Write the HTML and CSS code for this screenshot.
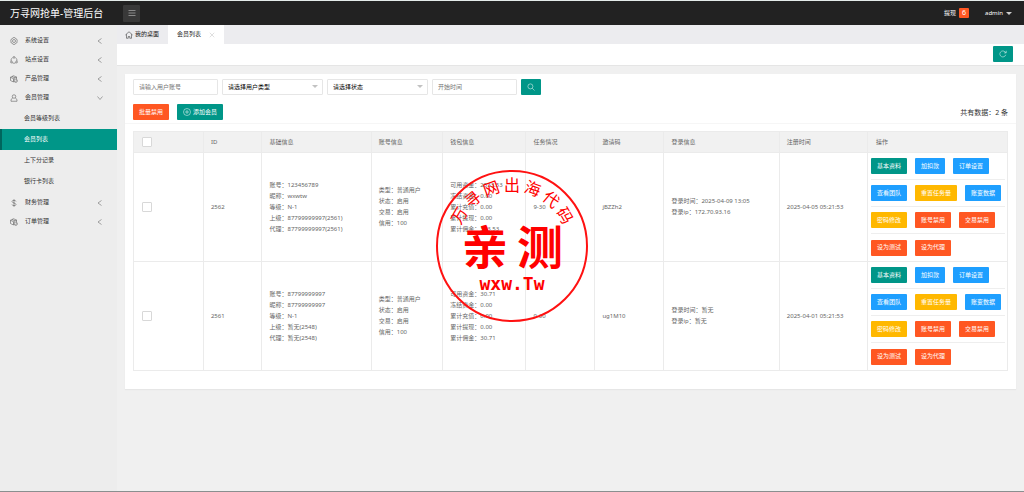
FILE: index.html
```html
<!DOCTYPE html>
<html lang="zh-CN">
<head>
<meta charset="utf-8">
<title>万寻网抢单-管理后台</title>
<link rel="stylesheet" href="styles.css">
</head>
<body>
<svg class="defs" width="0" height="0" aria-hidden="true">
  <symbol id="i-gear" viewBox="0 0 16 16"><path d="M5.500 1.800 8 1l2.500.8 1 1.700 2 .8.9 2.500L13.800 8l.6 2.200-.9 1.500-2 .8-1 1.700L8 15l-2.500-.8-1-1.700-2-.8-.9-1.500L2.200 8l-.6-1.200.9-2.500 2-.8z"/><circle cx="8" cy="8" r="3"/></symbol>
  <symbol id="i-site" viewBox="0 0 16 16"><path d="M5 3.500C2.500 5 1.700 7.500 2.300 10M11 3.500c2.500 1.500 3.300 4 2.700 6.500M4.500 13.500c2 1.300 5 1.300 7 0"/><circle cx="8" cy="2.800" r="1.800"/><circle cx="2.900" cy="12" r="1.800"/><circle cx="13.100" cy="12" r="1.800"/></symbol>
  <symbol id="i-box" viewBox="0 0 16 16"><path d="M1 4.500 7 1.500l6 2.500v4M1 4.500v6.500l6 3V7.500zM7 7.500 13 4M4 3l6 2.800"/><circle cx="11.500" cy="11.500" r="3.300"/><path d="m10 11.500 1.200 1.200 2-2.200"/></symbol>
  <symbol id="i-user" viewBox="0 0 16 16"><circle cx="8" cy="5" r="3.500"/><path d="M5.500 8 2 11v3.500h12V11l-3.500-3"/></symbol>
  <symbol id="i-dollar" viewBox="0 0 16 16"><path d="M12 5c0-3-8-3.300-8 0s8 2.700 8 6-8 3-8 0M8 .5v15"/></symbol>
  <symbol id="i-left" viewBox="0 0 16 16"><path d="M11 3 4 8l7 5"/></symbol>
  <symbol id="i-down" viewBox="0 0 16 16"><path d="m3 5 5 6 5-6"/></symbol>
  <symbol id="i-home" viewBox="0 0 16 16"><path d="M.8 8 8 1.500 15.200 8M3 6.500v8h3.500V11h3v3.500H13v-8"/></symbol>
  <symbol id="i-close" viewBox="0 0 16 16"><path d="m2 2 12 12M14 2 2 14"/></symbol>
  <symbol id="i-bars" viewBox="0 0 16 16"><path d="M1 3h14M1 8h14M1 13h14"/></symbol>
  <symbol id="i-refresh" viewBox="0 0 16 16"><path d="M13.500 9.500A6 6 0 1 1 12 3.700L14 5.500M14.500 1.500v4.300h-4.300"/></symbol>
  <symbol id="i-search" viewBox="0 0 16 16"><circle cx="6.800" cy="6.800" r="5"/><path d="m10.500 10.500 4.500 4.500"/></symbol>
  <symbol id="i-add" viewBox="0 0 16 16"><circle cx="8" cy="8" r="7"/><path d="M8 4v8M4 8h8"/></symbol>
</svg>

<header class="topbar">
  <a class="brand" href="#">万寻网抢单-管理后台</a>
  <button class="toggle" type="button" aria-label="菜单"><svg class="icon"><use href="#i-bars"/></svg></button>
  <nav class="account">
    <a class="withdraw" href="#">提现 <span class="badge">6</span></a>
    <a class="admin" href="#">admin <span class="caret"></span></a>
  </nav>
</header>

<div class="body">
  <nav class="sidebar">
    <a class="item" href="#"><svg class="icon"><use href="#i-gear"/></svg><span>系统设置</span><svg class="arrow"><use href="#i-left"/></svg></a>
    <a class="item" href="#"><svg class="icon"><use href="#i-site"/></svg><span>站点设置</span><svg class="arrow"><use href="#i-left"/></svg></a>
    <a class="item" href="#"><svg class="icon"><use href="#i-box"/></svg><span>产品管理</span><svg class="arrow"><use href="#i-left"/></svg></a>
    <a class="item" href="#"><svg class="icon"><use href="#i-user"/></svg><span>会员管理</span><svg class="arrow"><use href="#i-down"/></svg></a>
    <div class="submenu">
      <a href="#">会员等级列表</a>
      <a class="current" href="#">会员列表</a>
      <a href="#">上下分记录</a>
      <a href="#">银行卡列表</a>
    </div>
    <a class="item" href="#"><svg class="icon"><use href="#i-dollar"/></svg><span>财务管理</span><svg class="arrow"><use href="#i-left"/></svg></a>
    <a class="item" href="#"><svg class="icon"><use href="#i-box"/></svg><span>订单管理</span><svg class="arrow"><use href="#i-left"/></svg></a>
  </nav>

  <main class="main">
    <div class="tabs">
      <a class="tab" href="#"><svg class="icon"><use href="#i-home"/></svg>我的桌面</a>
      <a class="tab active" href="#">会员列表<svg class="close"><use href="#i-close"/></svg></a>
    </div>
    <div class="crumb"><button class="btn green square" type="button" aria-label="刷新"><svg class="icon"><use href="#i-refresh"/></svg></button></div>

    <section class="card">
      <div class="card-head">
        <form class="filters">
          <input class="field" type="text" placeholder="请输入用户账号" aria-label="用户账号">
          <span class="pick"><select aria-label="用户类型"><option>请选择用户类型</option></select></span>
          <span class="pick"><select aria-label="状态"><option>请选择状态</option></select></span>
          <input class="field" type="text" placeholder="开始时间" aria-label="开始时间">
          <button class="btn green square" type="button" aria-label="搜索"><svg class="icon"><use href="#i-search"/></svg></button>
        </form>
        <div class="tools">
          <button class="btn red" type="button">批量禁用</button>
          <button class="btn green" type="button"><svg class="icon"><use href="#i-add"/></svg>添加会员</button>
          <span class="total">共有数据：2 条</span>
        </div>
      </div>
      <div class="card-body">
        <table class="members">
          <thead>
            <tr>
              <th class="c-check"><input type="checkbox" aria-label="全选"></th>
              <th class="c-id">ID</th>
              <th class="c-base">基础信息</th>
              <th class="c-account">账号信息</th>
              <th class="c-wallet">钱包信息</th>
              <th class="c-task">任务情况</th>
              <th class="c-code">邀请码</th>
              <th class="c-login">登录信息</th>
              <th class="c-time">注册时间</th>
              <th class="c-ops">操作</th>
            </tr>
          </thead>
          <tbody>
            <tr>
              <td><input type="checkbox" aria-label="选择 2562"></td>
              <td>2562</td>
              <td>账号：123456789<br>昵称：wxwtw<br>等级：N-1<br>上级：87799999997(2561)<br>代理：87799999997(2561)</td>
              <td>类型：普通用户<br>状态：启用<br>交易：启用<br>信用：100</td>
              <td>可用资金：2533.53<br>冻结资金：0.00<br>累计充值：0.00<br>累计提现：0.00<br>累计佣金：333.53</td>
              <td>9-30</td>
              <td>jBZZh2</td>
              <td>登录时间：2025-04-09 13:05<br>登录ip：172.70.93.16</td>
              <td>2025-04-05 05:21:53</td>
              <td class="ops">
                <div><button class="btn green" type="button">基本资料</button><button class="btn blue" type="button">加扣款</button><button class="btn blue" type="button">订单设置</button></div>
                <div><button class="btn blue" type="button">查看团队</button><button class="btn amber" type="button">重置任务量</button><button class="btn blue" type="button">账变数据</button></div>
                <div><button class="btn amber" type="button">密码修改</button><button class="btn red" type="button">账号禁用</button><button class="btn red" type="button">交易禁用</button></div>
                <div><button class="btn red" type="button">设为测试</button><button class="btn red" type="button">设为代理</button></div>
              </td>
            </tr>
            <tr>
              <td><input type="checkbox" aria-label="选择 2561"></td>
              <td>2561</td>
              <td>账号：87799999997<br>昵称：87799999997<br>等级：N-1<br>上级：暂无(2548)<br>代理：暂无(2548)</td>
              <td>类型：普通用户<br>状态：启用<br>交易：启用<br>信用：100</td>
              <td>可用资金：30.71<br>冻结资金：0.00<br>累计充值：0.00<br>累计提现：0.00<br>累计佣金：30.71</td>
              <td>0-30</td>
              <td>ug1M10</td>
              <td>登录时间：暂无<br>登录ip：暂无</td>
              <td>2025-04-01 05:21:53</td>
              <td class="ops">
                <div><button class="btn green" type="button">基本资料</button><button class="btn blue" type="button">加扣款</button><button class="btn blue" type="button">订单设置</button></div>
                <div><button class="btn blue" type="button">查看团队</button><button class="btn amber" type="button">重置任务量</button><button class="btn blue" type="button">账变数据</button></div>
                <div><button class="btn amber" type="button">密码修改</button><button class="btn red" type="button">账号禁用</button><button class="btn red" type="button">交易禁用</button></div>
                <div><button class="btn red" type="button">设为测试</button><button class="btn red" type="button">设为代理</button></div>
              </td>
            </tr>
          </tbody>
        </table>
      </div>
    </section>
  </main>
</div>

<svg class="seal" viewBox="-76 -76 152 152">
  <circle r="75"/>
  <g class="seal-arc">
    <text y="-55" transform="rotate(-60)">万</text>
    <text y="-55" transform="rotate(-40)">寻</text>
    <text y="-55" transform="rotate(-20)">网</text>
    <text y="-55">出</text>
    <text y="-55" transform="rotate(20)">海</text>
    <text y="-55" transform="rotate(40)">代</text>
    <text y="-55" transform="rotate(60)">码</text>
  </g>
  <text class="seal-main" x="-27" y="18">亲</text>
  <text class="seal-main" x="28" y="18">测</text>
  <text class="seal-url" x="0" y="44">wxw.Tw</text>
</svg>
</body>
</html>
```
FILE: styles.css
```css
* { box-sizing: border-box; }

body {
  margin: 0;
  min-height: 100vh;
  display: flex;
  flex-direction: column;
  position: relative;
  background: #f0f0f0;
  border-top: 1px solid #e4ebe9;
  border-bottom: 1px solid #8a8f8f;
  color: #333;
  font: 6px/11px "Noto Sans", "Noto Sans CJK SC", sans-serif;
}

a { color: inherit; text-decoration: none; }
button, input, select { font: inherit; color: inherit; margin: 0; }
svg { fill: none; stroke: currentColor; }
.defs { position: absolute; }
.icon { width: 8px; height: 8px; flex: none; }
.icon, .arrow, .close { stroke-width: 1px; }

.topbar {
  display: flex;
  align-items: center;
  height: 24px;
  padding-left: 10px;
  background: #222;
  color: #fff;
}
.brand { width: 113px; font-size: 10px; line-height: 24px; white-space: nowrap; }
.toggle {
  display: flex;
  align-items: center;
  justify-content: center;
  width: 17px;
  height: 17px;
  padding: 0;
  border: 0;
  border-radius: 1px;
  background: #393939;
  color: #ddd;
}
.account { display: flex; gap: 16px; margin-left: auto; padding-right: 12px; }
.account a { display: flex; align-items: center; gap: 3px; }
.badge {
  width: 10px;
  border-radius: 1px;
  background: #ff5722;
  font-size: 7px;
  line-height: 10px;
  text-align: center;
}
.caret { border: 3px solid transparent; border-top-color: #ccc; border-bottom: 0; }

.body { display: flex; flex: 1; }
.sidebar { width: 117px; flex: none; padding-top: 6px; background: #ededed; }
.item { display: flex; align-items: center; height: 19px; padding: 0 13px 0 10px; }
.item .icon { color: #444; }
.item span { flex: 1; padding-left: 7px; }
.arrow { width: 8px; height: 8px; color: #555; }
.submenu { padding: 1px 0; }
.submenu a { display: block; padding-left: 24px; line-height: 21px; }
.submenu .current {
  padding-left: 22px;
  border-left: 2px solid #00665d;
  background: #009688;
  color: #fff;
}

.main { flex: 1; min-width: 0; }
.tabs { display: flex; height: 19px; background: #ececef; }
.tab { display: flex; align-items: center; gap: 2px; padding: 0 9px 0 8px; color: #222; }
.tab.active { gap: 8px; padding: 0 9px; background: #fff; }
.close { width: 6px; height: 6px; color: #aaa; }
.crumb {
  display: flex;
  justify-content: flex-end;
  align-items: center;
  height: 22px;
  padding: 0 11px 2px 0;
  border-bottom: 1px solid #e5e5e5;
  background: #fff;
}

.btn {
  display: inline-flex;
  align-items: center;
  justify-content: center;
  gap: 2px;
  height: 16px;
  padding: 0 6px;
  border: 0;
  border-radius: 1px;
  color: #fff;
  white-space: nowrap;
}
.square { width: 20px; padding: 0; }
.green { background: #009688; }
.blue { background: #1e9fff; }
.amber { background: #ffb800; }
.red { background: #ff5722; }

.card { margin: 8px; background: #fff; box-shadow: 0 1px 1px #e6e6e6; }
.card-head { padding: 5px 8px 3px; border-bottom: 1px solid #f6f6f6; }
.filters { display: flex; gap: 4px; }
.field, .pick select {
  height: 16px;
  padding: 0 5px;
  border: 1px solid #e6e6e6;
  border-radius: 1px;
  background: #fff;
}
.field { width: 85px; }
.field::placeholder { color: #757575; }
.pick { position: relative; width: 101px; }
.pick select { display: block; width: 100%; appearance: none; color: #000; }
.pick::after {
  content: "";
  position: absolute;
  top: 6px;
  right: 5px;
  border: 3px solid transparent;
  border-top-color: #c2c2c2;
  border-bottom: 0;
}
.tools { display: flex; align-items: center; gap: 8px; padding-top: 9px; }
.total { margin-left: auto; font-size: 7px; }

.card-body { padding: 7px 8px 18px; }
.members { width: 100%; table-layout: fixed; border-collapse: collapse; color: #666; }
.members th, .members td {
  padding: 0 0 0 7px;
  border: 1px solid #ebebeb;
  text-align: left;
  font-weight: 400;
  white-space: nowrap;
}
.members th { height: 21px; background: #f1f1f1; }
.members .c-check, .members td:first-child { padding-left: 8px; }
.c-check { width: 8%; }
.c-id { width: 6.7%; }
.c-base { width: 12.5%; }
.c-account { width: 8.2%; }
.c-wallet { width: 9.5%; }
.c-task { width: 7.9%; }
.c-code { width: 7.9%; }
.c-login { width: 13.2%; }
.c-time { width: 10.1%; }
.members .c-ops { padding-left: 8px; }
.members input {
  display: block;
  width: 10px;
  height: 10px;
  appearance: none;
  border: 1px solid #d8d8d8;
  border-radius: 1px;
  background: #fff;
}
.members .ops { padding: 0 2px 0 3px; }
.ops div { display: flex; align-items: center; gap: 8px; height: 27px; border-bottom: 1px solid #eee; }
.ops div:last-child { border-bottom: 0; }

.seal {
  position: absolute;
  top: 169px;
  left: 436px;
  width: 152px;
  height: 152px;
  pointer-events: none;
}
.seal circle { stroke: #f11; stroke-width: 2px; }
.seal text { fill: #f00; stroke: none; text-anchor: middle; }
.seal-arc { font-family: "Noto Sans CJK SC", sans-serif; font-size: 16px; }
.seal-main { font: 700 46px "Noto Sans CJK SC", sans-serif; }
.seal-url { font: 700 18px "DejaVu Sans Mono", monospace; }
```
